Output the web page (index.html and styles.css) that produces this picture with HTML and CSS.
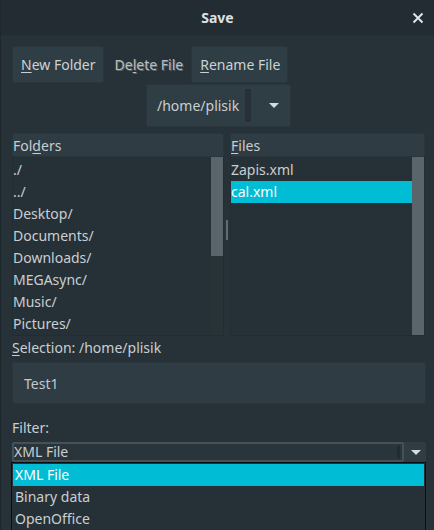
FILE: index.html
```html
<!DOCTYPE html>
<html>
<head>
<meta charset="utf-8">
<link rel="stylesheet" href="styles.css">
</head>
<body>
<div class="window">
  <div class="titlebar">
    <span></span>
    <span class="title">Save</span>
    <span class="close">
      <svg width="12" height="12" viewBox="0 0 12 12"><path d="M1.5 1.5 L10.5 10.5 M10.5 1.5 L1.5 10.5" stroke="#dfe3e6" stroke-width="2" fill="none"/></svg>
    </span>
  </div>
  <div class="content">
    <div class="toolbar">
      <div class="btn"><u>N</u>ew Folder</div>
      <div class="btn disabled">De<u>l</u>ete File</div>
      <div class="btn"><u>R</u>ename File</div>
    </div>
    <div class="pathrow">
      <div class="pathcombo">
        <span class="pathtext">/home/plisik</span>
        <span class="sep"></span>
        <span class="arrow"></span>
      </div>
    </div>
    <div class="panes">
      <div class="pane">
        <div class="header">Fol<u>d</u>ers</div>
        <div class="listwrap">
          <div class="list">
            <div class="item">./</div>
            <div class="item">../</div>
            <div class="item">Desktop/</div>
            <div class="item">Documents/</div>
            <div class="item">Downloads/</div>
            <div class="item">MEGAsync/</div>
            <div class="item">Music/</div>
            <div class="item">Pictures/</div>
          </div>
          <div class="scroll"><div class="thumb short"></div></div>
        </div>
      </div>
      <div class="splitter"><span class="grip"></span></div>
      <div class="pane">
        <div class="header"><u>F</u>iles</div>
        <div class="listwrap">
          <div class="list">
            <div class="item">Zapis.xml</div>
            <div class="item selected">cal.xml</div>
          </div>
          <div class="scroll"><div class="thumb full"></div></div>
        </div>
      </div>
    </div>
    <div class="label sel-label"><u>S</u>election: /home/plisik</div>
    <div class="entry">Test1</div>
    <div class="label filter-label">Filter:</div>
    <div class="filter">
      <div class="filterbox">XML File<span class="caret"></span></div>
      <span class="arrow"></span>
      <div class="popup">
        <div class="pitem selected">XML File</div>
        <div class="pitem">Binary data</div>
        <div class="pitem">OpenOffice</div>
      </div>
    </div>
  </div>
</div>
</body>
</html>
```

FILE: styles.css
```css
* { box-sizing: border-box; }
html, body {
  margin: 0;
  padding: 0;
  width: 434px;
  height: 530px;
  overflow: hidden;
  background: #263238;
  font-family: "Noto Sans", "Open Sans", sans-serif;
  font-size: 14px;
  color: #c9ced1;
}
u { text-decoration: underline; text-underline-offset: 2px; }
.window {
  height: 530px;
  display: flex;
  flex-direction: column;
  border-left: 1px solid #1e272c;
}
.titlebar {
  height: 36px;
  background: #222c32;
  display: grid;
  grid-template-columns: 1fr auto 1fr;
  align-items: center;
  border-bottom: 1px solid #253036;
}
.title {
  font-weight: bold;
  color: #dde1e4;
  font-size: 14px;
}
.close {
  justify-self: end;
  margin-right: 10px;
  display: flex;
}
.content {
  flex: 1;
  background: #273238;
  padding: 10px 9px 0 11px;
  display: flex;
  flex-direction: column;
  position: relative;
}
.toolbar {
  display: flex;
  gap: 1px;
  height: 37px;
}
.btn {
  background: #2f3d44;
  border-radius: 2px;
  border: 1px solid #2a363c;
  padding: 0 7px 0 8px;
  display: flex;
  align-items: center;
  color: #cdd2d5;
  font-size: 14px;
  white-space: nowrap;
}
.btn.disabled {
  background: transparent;
  border-color: transparent;
  color: #b8bec2;
  text-shadow: 1px 1px 0 rgba(255,255,255,0.25);
  padding: 0 6px 0 9px;
}
.pathrow {
  display: flex;
  justify-content: center;
  margin-top: 1px;
  padding-left: 0;
}
.pathcombo {
  width: 145px;
  height: 43px;
  background: #2f3d44;
  border-radius: 2px;
  border: 1px solid #2a363c;
  display: flex;
  align-items: center;
  padding-left: 10px;
}
.pathtext { color: #c9ced1; }
.sep {
  width: 6px;
  height: 33px;
  background: #263036;
  margin-left: 6px;
}
.pathcombo .arrow { margin-left: 18px; }
.arrow {
  width: 0; height: 0;
  border-left: 5px solid transparent;
  border-right: 5px solid transparent;
  border-top: 5px solid #d5dadd;
}
.panes {
  margin-top: 6px;
  display: grid;
  grid-template-columns: 212px 6px 195px;
  height: 195px;
}
.pane { display: flex; flex-direction: column; }
.header {
  height: 24px;
  background: #2f3c43;
  border-radius: 2px;
  border: 1px solid #2a363c;
  padding-left: 0;
  display: flex;
  align-items: center;
  font-size: 14px;
}
.listwrap {
  flex: 1;
  display: flex;
  border: 1px solid #222c31;
  border-top: none;
  overflow: hidden;
}
.list {
  flex: 1;
  background: #263137;
  overflow: hidden;
  padding-top: 2px;
}
.item {
  height: 22px;
  line-height: 22px;
  padding-left: 0;
  white-space: nowrap;
}
.item.selected { background: #00bcd4; color: #ffffff; }
.scroll {
  width: 12px;
  background: #283338;
}
.thumb { background: #59656b; }
.thumb.short { height: 99px; }
.thumb.full { height: 100%; }
.splitter { position: relative; }
.grip {
  position: absolute;
  left: 2px;
  top: 87px;
  width: 2px;
  height: 20px;
  background: #5f6b71;
}
.label { font-size: 14px; }
.sel-label { margin-top: 9px; height: 21px; line-height: 21px; }
.entry {
  margin-top: 4px;
  height: 42px;
  width: 414px;
  background: #2f3c43;
  border: 1px solid #2a363c;
  border-radius: 2px;
  padding-left: 11px;
  display: flex;
  align-items: center;
  color: #c2c8cb;
}
.filter-label { margin-top: 14px; height: 20px; line-height: 20px; }
.filter {
  margin-top: 4px;
  height: 20px;
  width: 414px;
  display: flex;
  align-items: center;
  position: relative;
  background: #2f3c43;
  border-radius: 2px;
}
.filterbox {
  width: 392px;
  height: 20px;
  border: 2px solid #445157;
  border-radius: 2px;
  line-height: 16px;
  padding-left: 0;
  position: relative;
  background: #2a353b;
}
.caret {
  position: absolute;
  right: 2px;
  top: 2px;
  width: 3px;
  height: 12px;
  background: #222b30;
}
.filter .arrow { margin-left: 7px; }
.popup {
  position: absolute;
  left: -1px;
  top: 20px;
  width: 415px;
  background: #263137;
  border: 1px solid #0b0f11;
  padding: 1px 1px 0 1px;
}
.pitem {
  height: 22px;
  line-height: 22px;
  padding-left: 2px;
}
.pitem.selected { background: #00bcd4; color: #ffffff; }
```
